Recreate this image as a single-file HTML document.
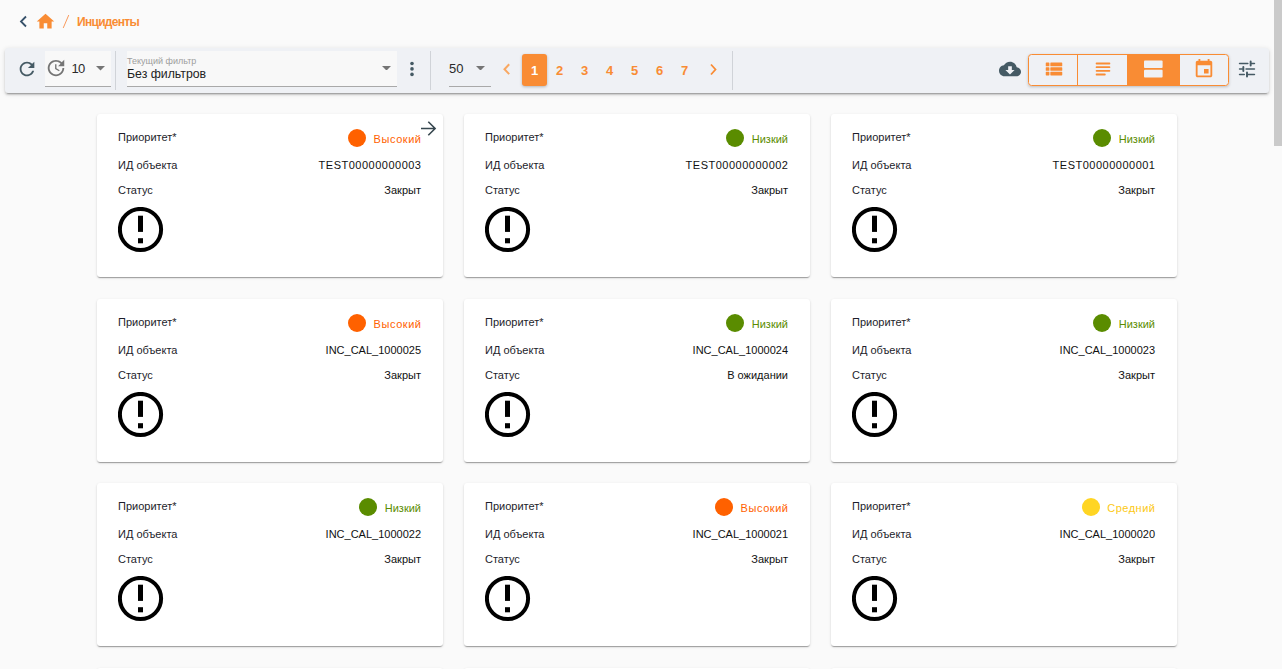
<!DOCTYPE html>
<html><head><meta charset="utf-8">
<style>
*{box-sizing:border-box;margin:0;padding:0}
html,body{width:1282px;height:669px;overflow:hidden;background:#fafafa;font-family:"Liberation Sans",sans-serif;color:#212121}
.abs{position:absolute}
.sb{position:absolute;left:1274px;top:0;width:8px;height:146px;background:#cacaca}
.bc{position:absolute;left:0;top:0}
.crumb{position:absolute;left:77px;top:15px;font-size:12px;font-weight:bold;color:#f98c34;letter-spacing:-0.7px;line-height:14px}
.slash{position:absolute;left:62px;top:13px;font-size:14px;color:#f98c34;line-height:16px}
.tb{position:absolute;left:5px;top:47px;width:1264px;height:46px}
.tbbg{position:absolute;left:5px;top:48px;width:1264px;height:45px;background:#eff1f5;border-radius:3px;box-shadow:0 3px 1px -2px rgba(0,0,0,.2),0 2px 2px 0 rgba(0,0,0,.14),0 1px 5px 0 rgba(0,0,0,.12)}
.sel{position:absolute;background:#f8f8f8;border-bottom:1px solid #a9a9a9}
.div{position:absolute;top:4px;width:1px;height:39px;background:#d0d3d8}
.card{position:absolute;width:346px;height:162.8px;background:#fff;border-radius:3px;box-shadow:0 2px 1px -1px rgba(0,0,0,.2),0 1px 1px 0 rgba(0,0,0,.14),0 1px 3px 0 rgba(0,0,0,.12)}
.row{position:absolute;left:21px;right:22px;font-size:11px;line-height:13px;height:13px}
.lbl{position:absolute;left:0;top:0;white-space:nowrap;color:#1d1d2b}
.val{position:absolute;right:0;top:0;white-space:nowrap;color:#111}
.r1{top:16.7px}
.r1 .val{top:2px}
.r2{top:45.2px}
.r3{top:70.2px}
.val.high{color:#ff6100;letter-spacing:0.55px;margin-right:-0.55px}
.val.low{color:#5a8c00}
.val.mid{color:#fcc814;letter-spacing:0.5px;margin-right:-0.5px}
.dot{position:absolute;width:18px;height:18px;border-radius:50%;left:-25.7px;top:-4.2px}
.high .dot{background:#ff6100}
.low .dot{background:#5a8c00}
.mid .dot{background:#ffd523}
.warn{position:absolute;left:21px;top:92.8px}
.arr{position:absolute;left:324px;top:6.5px}
.pg{position:absolute;top:16px;font-size:13px;line-height:15px;color:#f98c34;width:25px;text-align:center;font-weight:bold}
</style></head><body>
<div class="sb"></div>
<svg class="abs" style="left:16px;top:10px" width="16" height="24" viewBox="0 0 16 24"><path d="M10 6.5L5 11.5l5 5" fill="none" stroke="#37516a" stroke-width="1.8"/></svg>
<svg class="abs" style="left:34.5px;top:11.4px" width="21" height="21" viewBox="0 0 24 24"><path d="M10 20v-6h4v6h5v-8h3L12 3 2 12h3v8z" fill="#f98c34"/></svg>
<svg class="abs" style="left:60px;top:13px" width="12" height="17" viewBox="0 0 12 17"><path d="M3.4 14.6L8.6 2.4" stroke="#f99a5c" stroke-width="1" stroke-linecap="round"/></svg>
<span class="crumb">Инциденты</span>

<div class="tbbg"></div>
<div class="tb">
  <svg class="abs" style="left:11px;top:11.2px" width="22" height="22" viewBox="0 0 24 24"><path d="M17.65 6.35C16.2 4.9 14.21 4 12 4c-4.42 0-7.99 3.58-7.99 8s3.57 8 7.99 8c3.73 0 6.84-2.55 7.73-6h-2.08c-.82 2.33-3.04 4-5.65 4-3.31 0-6-2.69-6-6s2.69-6 6-6c1.66 0 3.14.69 4.22 1.78L13 11h7V4l-2.35 2.35z" fill="#455a64"/></svg>
  <div class="sel" style="left:40px;top:4px;width:66px;height:36px"></div>
  <svg class="abs" style="left:39.7px;top:10.45px" width="22" height="22" viewBox="0 0 24 24"><path d="M21 10.12h-6.78l2.74-2.82c-2.73-2.7-7.15-2.8-9.88-.1-2.73 2.71-2.730 7.08 0 9.79s7.15 2.71 9.88 0C18.32 15.65 19 14.08 19 12.1h2c0 1.98-.88 4.55-2.64 6.29-3.51 3.48-9.21 3.48-12.72 0-3.5-3.47-3.53-9.11-.02-12.58s9.14-3.47 12.650 0L21 3v7.12zM12.5 8v4.25l3.5 2.08-.72 1.21L11 13V8h1.5z" fill="#757575"/></svg>
  <span class="abs" style="left:66.5px;top:14px;font-size:13px;line-height:15px;color:#2a2a2a;letter-spacing:-0.8px">10</span>
  <svg class="abs" style="left:91.4px;top:19px" width="9" height="4.6" viewBox="0 0 10 5"><path d="M0 0h10L5 5z" fill="#757575"/></svg>
  <div class="div" style="left:110px"></div>
  <div class="sel" style="left:122px;top:4px;width:270px;height:36px"></div>
  <span class="abs" style="left:122px;top:9px;font-size:9px;line-height:10px;color:#9e9e9e">Текущий фильтр</span>
  <span class="abs" style="left:122px;top:20px;font-size:12.3px;line-height:14px;color:#222">Без фильтров</span>
  <svg class="abs" style="left:376.5px;top:18.9px" width="9" height="4.6" viewBox="0 0 10 5"><path d="M0 0h10L5 5z" fill="#757575"/></svg>
  <svg class="abs" style="left:397px;top:12px" width="20" height="20" viewBox="0 0 20 20"><circle cx="10" cy="4.5" r="1.8" fill="#455a64"/><circle cx="10" cy="9.9" r="1.8" fill="#455a64"/><circle cx="10" cy="15.4" r="1.8" fill="#455a64"/></svg>
  <div class="div" style="left:425px"></div>
  <span class="abs" style="left:444px;top:14px;font-size:13px;line-height:15px;color:#2a2a2a">50</span>
  <svg class="abs" style="left:471.2px;top:18.9px" width="9" height="4.6" viewBox="0 0 10 5"><path d="M0 0h10L5 5z" fill="#757575"/></svg>
  <div class="abs" style="left:444px;top:39px;width:42px;height:1px;background:#a9a9a9"></div>
  <svg class="abs" style="left:493.4px;top:12px" width="20" height="20" viewBox="0 0 20 20"><path d="M11.2 5.3L6.5 10.2l4.7 4.9" fill="none" stroke="#f9a862" stroke-width="2"/></svg>
  <div class="abs" style="left:517px;top:7px;width:25px;height:32px;background:#f98c34;border-radius:3px;box-shadow:0 1px 3px rgba(0,0,0,.25)"></div>
  <span class="pg" style="left:517px;color:#fff">1</span>
  <span class="pg" style="left:542px">2</span>
  <span class="pg" style="left:567px">3</span>
  <span class="pg" style="left:592px">4</span>
  <span class="pg" style="left:617px">5</span>
  <span class="pg" style="left:642px">6</span>
  <span class="pg" style="left:667px">7</span>
  <svg class="abs" style="left:699px;top:12px" width="20" height="20" viewBox="0 0 20 20"><path d="M7 5.5l4.5 5L7 15.5" fill="none" stroke="#f98c34" stroke-width="1.8"/></svg>
  <div class="div" style="left:727px"></div>

  <svg class="abs" style="left:993.7px;top:10.7px" width="22" height="22" viewBox="0 0 24 24"><path d="M19.35 10.04C18.67 6.59 15.64 4 12 4 9.11 4 6.6 5.64 5.35 8.04 2.34 8.36 0 10.91 0 14c0 3.310 2.69 6 6 6h13c2.76 0 5-2.24 5-5 0-2.64-2.05-4.78-4.65-4.96zM17 13l-5 5-5-5h3V9h4v4h3z" fill="#455a64"/></svg>
  <div class="abs" style="left:1023px;top:7px;width:201px;height:32px;border:1.3px solid #f98c34;border-radius:3.5px;box-shadow:0 1px 3px rgba(0,0,0,.22);overflow:hidden">
    <div class="abs" style="left:47.8px;top:0;width:1.6px;height:30px;background:#f98c34"></div>
    <div class="abs" style="left:97.5px;top:0;width:53.4px;height:30px;background:#f98c34"></div>
  </div>
  <svg class="abs" style="left:1037.75px;top:10.6px" width="22" height="22" viewBox="0 0 24 24"><path d="M3.6 10h2.8c.33 0 .6.27.6.6v2.8c0 .33-.27.6-.6.6H3.6c-.33 0-.6-.27-.6-.6v-2.8c0-.33.27-.6.6-.6zm0 5h2.8c.33 0 .6.27.6.6v2.8c0 .33-.27.6-.6.6H3.6c-.33 0-.6-.27-.6-.6v-2.8c0-.33.27-.6.6-.6zm0-10h2.8c.33 0 .6.27.6.6v2.8c0 .33-.27.6-.6.6H3.6C3.27 9 3 8.73 3 8.4V5.6c0-.33.27-.6.6-.6zm5 5h11.8c.33 0 .6.27.6.6v2.8c0 .33-.27.6-.6.6H8.6c-.33 0-.6-.27-.6-.6v-2.8c0-.33.27-.6.6-.6zm0 5h11.8c.33 0 .6.27.6.6v2.8c0 .33-.27.6-.6.6H8.6c-.33 0-.6-.27-.6-.6v-2.8c0-.33.27-.6.6-.6zm0-10h11.8c.33 0 .6.27.6.6v2.8c0 .33-.27.6-.6.6H8.6C8.27 9 8 8.73 8 8.4V5.6c0-.33.27-.6.6-.6z" fill="#f98c34"/></svg>
  <svg class="abs" style="left:1087px;top:10.9px" width="22" height="22" viewBox="0 0 24 24"><g stroke="#f98c34" stroke-width="2" stroke-linecap="round"><path d="M5 6h14M5 10h14M5 14h14M5 18h9"/></g></svg>
  <svg class="abs" style="left:1137px;top:11px" width="24" height="24" viewBox="0 0 24 24"><rect x="2" y="2.6" width="18.6" height="7.4" rx="0.9" fill="#eff1f5"/><rect x="2" y="11.8" width="18.6" height="7.6" rx="0.9" fill="#eff1f5"/></svg>
  <svg class="abs" style="left:1187.75px;top:11.1px" width="22" height="22" viewBox="0 0 24 24"><path d="M17 12h-5v5h5v-5zM16 1v2H8V1H6v2H5c-1.11 0-1.99.9-1.99 2L3 19c0 1.1.89 2 2 2h14c1.1 0 2-.9 2-2V5c0-1.1-.9-2-2-2h-1V1h-2zm3 18H5V8h14v11z" fill="#f98c34"/></svg>
  <svg class="abs" style="left:1231.15px;top:11.25px" width="22" height="22" viewBox="0 0 24 24"><g fill="none" stroke="#455a64" stroke-linecap="round"><path stroke-width="1.7" d="M3.9 6h9M17 6h3.1M3.9 12h3.1M11 12h9.1M3.9 18h5.1M13 18h7.1"/><path stroke-width="2.1" d="M16 3.9v4.2M8 9.9v4.2M12 15.9v4.2"/></g></svg>
</div>
<div class="card" style="left:97px;top:114px"><svg class="arr" width="16" height="16" viewBox="0 0 16 16"><path d="M0 7.5h13.6M7.3 0.8l6.8 6.7-6.8 6.7" fill="none" stroke="#37474f" stroke-width="1.6"/></svg>
<div class="row r1"><span class="lbl">Приоритет*</span><span class="val high"><i class="dot"></i>Высокий</span></div>
<div class="row r2"><span class="lbl">ИД объекта</span><span class="val" style="letter-spacing:0.5px;margin-right:-0.5px">TEST00000000003</span></div>
<div class="row r3"><span class="lbl">Статус</span><span class="val">Закрыт</span></div>
<svg class="warn" width="50" height="50" viewBox="0 0 50 50"><circle cx="22.5" cy="22.5" r="20.6" fill="none" stroke="#000" stroke-width="4"/><rect x="20" y="8.7" width="5" height="16.2" fill="#000"/><rect x="20" y="31.2" width="5" height="5.1" fill="#000"/></svg>
</div>
<div class="card" style="left:464px;top:114px">
<div class="row r1"><span class="lbl">Приоритет*</span><span class="val low"><i class="dot"></i>Низкий</span></div>
<div class="row r2"><span class="lbl">ИД объекта</span><span class="val" style="letter-spacing:0.5px;margin-right:-0.5px">TEST00000000002</span></div>
<div class="row r3"><span class="lbl">Статус</span><span class="val">Закрыт</span></div>
<svg class="warn" width="50" height="50" viewBox="0 0 50 50"><circle cx="22.5" cy="22.5" r="20.6" fill="none" stroke="#000" stroke-width="4"/><rect x="20" y="8.7" width="5" height="16.2" fill="#000"/><rect x="20" y="31.2" width="5" height="5.1" fill="#000"/></svg>
</div>
<div class="card" style="left:831px;top:114px">
<div class="row r1"><span class="lbl">Приоритет*</span><span class="val low"><i class="dot"></i>Низкий</span></div>
<div class="row r2"><span class="lbl">ИД объекта</span><span class="val" style="letter-spacing:0.5px;margin-right:-0.5px">TEST00000000001</span></div>
<div class="row r3"><span class="lbl">Статус</span><span class="val">Закрыт</span></div>
<svg class="warn" width="50" height="50" viewBox="0 0 50 50"><circle cx="22.5" cy="22.5" r="20.6" fill="none" stroke="#000" stroke-width="4"/><rect x="20" y="8.7" width="5" height="16.2" fill="#000"/><rect x="20" y="31.2" width="5" height="5.1" fill="#000"/></svg>
</div>
<div class="card" style="left:97px;top:299px">
<div class="row r1"><span class="lbl">Приоритет*</span><span class="val high"><i class="dot"></i>Высокий</span></div>
<div class="row r2"><span class="lbl">ИД объекта</span><span class="val">INC_CAL_1000025</span></div>
<div class="row r3"><span class="lbl">Статус</span><span class="val">Закрыт</span></div>
<svg class="warn" width="50" height="50" viewBox="0 0 50 50"><circle cx="22.5" cy="22.5" r="20.6" fill="none" stroke="#000" stroke-width="4"/><rect x="20" y="8.7" width="5" height="16.2" fill="#000"/><rect x="20" y="31.2" width="5" height="5.1" fill="#000"/></svg>
</div>
<div class="card" style="left:464px;top:299px">
<div class="row r1"><span class="lbl">Приоритет*</span><span class="val low"><i class="dot"></i>Низкий</span></div>
<div class="row r2"><span class="lbl">ИД объекта</span><span class="val">INC_CAL_1000024</span></div>
<div class="row r3"><span class="lbl">Статус</span><span class="val">В ожидании</span></div>
<svg class="warn" width="50" height="50" viewBox="0 0 50 50"><circle cx="22.5" cy="22.5" r="20.6" fill="none" stroke="#000" stroke-width="4"/><rect x="20" y="8.7" width="5" height="16.2" fill="#000"/><rect x="20" y="31.2" width="5" height="5.1" fill="#000"/></svg>
</div>
<div class="card" style="left:831px;top:299px">
<div class="row r1"><span class="lbl">Приоритет*</span><span class="val low"><i class="dot"></i>Низкий</span></div>
<div class="row r2"><span class="lbl">ИД объекта</span><span class="val">INC_CAL_1000023</span></div>
<div class="row r3"><span class="lbl">Статус</span><span class="val">Закрыт</span></div>
<svg class="warn" width="50" height="50" viewBox="0 0 50 50"><circle cx="22.5" cy="22.5" r="20.6" fill="none" stroke="#000" stroke-width="4"/><rect x="20" y="8.7" width="5" height="16.2" fill="#000"/><rect x="20" y="31.2" width="5" height="5.1" fill="#000"/></svg>
</div>
<div class="card" style="left:97px;top:483px">
<div class="row r1"><span class="lbl">Приоритет*</span><span class="val low"><i class="dot"></i>Низкий</span></div>
<div class="row r2"><span class="lbl">ИД объекта</span><span class="val">INC_CAL_1000022</span></div>
<div class="row r3"><span class="lbl">Статус</span><span class="val">Закрыт</span></div>
<svg class="warn" width="50" height="50" viewBox="0 0 50 50"><circle cx="22.5" cy="22.5" r="20.6" fill="none" stroke="#000" stroke-width="4"/><rect x="20" y="8.7" width="5" height="16.2" fill="#000"/><rect x="20" y="31.2" width="5" height="5.1" fill="#000"/></svg>
</div>
<div class="card" style="left:464px;top:483px">
<div class="row r1"><span class="lbl">Приоритет*</span><span class="val high"><i class="dot"></i>Высокий</span></div>
<div class="row r2"><span class="lbl">ИД объекта</span><span class="val">INC_CAL_1000021</span></div>
<div class="row r3"><span class="lbl">Статус</span><span class="val">Закрыт</span></div>
<svg class="warn" width="50" height="50" viewBox="0 0 50 50"><circle cx="22.5" cy="22.5" r="20.6" fill="none" stroke="#000" stroke-width="4"/><rect x="20" y="8.7" width="5" height="16.2" fill="#000"/><rect x="20" y="31.2" width="5" height="5.1" fill="#000"/></svg>
</div>
<div class="card" style="left:831px;top:483px">
<div class="row r1"><span class="lbl">Приоритет*</span><span class="val mid"><i class="dot"></i>Средний</span></div>
<div class="row r2"><span class="lbl">ИД объекта</span><span class="val">INC_CAL_1000020</span></div>
<div class="row r3"><span class="lbl">Статус</span><span class="val">Закрыт</span></div>
<svg class="warn" width="50" height="50" viewBox="0 0 50 50"><circle cx="22.5" cy="22.5" r="20.6" fill="none" stroke="#000" stroke-width="4"/><rect x="20" y="8.7" width="5" height="16.2" fill="#000"/><rect x="20" y="31.2" width="5" height="5.1" fill="#000"/></svg>
</div>
<div class="card" style="left:97px;top:668px"></div>
<div class="card" style="left:464px;top:668px"></div>
<div class="card" style="left:831px;top:668px"></div>
</body></html>
